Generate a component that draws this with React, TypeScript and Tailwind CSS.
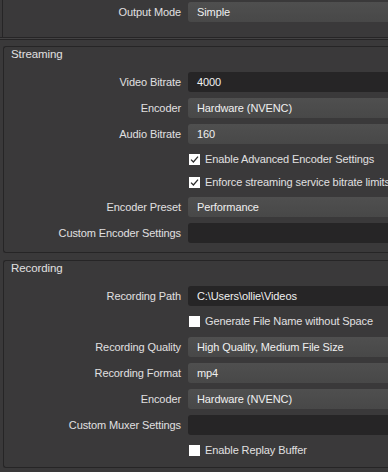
import React from 'react'

type Row =
  | { kind: 'combo'; label: string; value: string }
  | { kind: 'edit'; label: string; value: string }
  | { kind: 'check'; label: string; checked: boolean; h: string }

const streaming: Row[] = [
  { kind: 'edit', label: 'Video Bitrate', value: '4000' },
  { kind: 'combo', label: 'Encoder', value: 'Hardware (NVENC)' },
  { kind: 'combo', label: 'Audio Bitrate', value: '160' },
  { kind: 'check', label: 'Enable Advanced Encoder Settings', checked: true, h: 'h-[18px]' },
  { kind: 'check', label: 'Enforce streaming service bitrate limits', checked: true, h: 'h-[17px]' },
  { kind: 'combo', label: 'Encoder Preset', value: 'Performance' },
  { kind: 'edit', label: 'Custom Encoder Settings', value: '' },
]

const recording: Row[] = [
  { kind: 'edit', label: 'Recording Path', value: 'C:\\Users\\ollie\\Videos' },
  { kind: 'check', label: 'Generate File Name without Space', checked: false, h: 'h-[19px]' },
  { kind: 'combo', label: 'Recording Quality', value: 'High Quality, Medium File Size' },
  { kind: 'combo', label: 'Recording Format', value: 'mp4' },
  { kind: 'combo', label: 'Encoder', value: 'Hardware (NVENC)' },
  { kind: 'edit', label: 'Custom Muxer Settings', value: '' },
  { kind: 'check', label: 'Enable Replay Buffer', checked: false, h: 'h-[19px]' },
]

function CheckBox({ checked }: { checked: boolean }) {
  return (
    <div className="w-[11px] h-[11px] bg-white flex items-center justify-center shrink-0">
      {checked && (
        <svg width="9" height="9" viewBox="0 0 9 9">
          <path d="M1 4.6 L3.4 7 L8 1.6" fill="none" stroke="#2b2b2b" strokeWidth="1.3" />
        </svg>
      )}
    </div>
  )
}

function FormRow({ row }: { row: Row }) {
  if (row.kind === 'check') {
    return (
      <div className={`flex items-center ${row.h}`}>
        <div className="w-[185px] shrink-0" />
        <CheckBox checked={row.checked} />
        <span className="ml-[5px] whitespace-nowrap text-[#e1e0e1]">{row.label}</span>
      </div>
    )
  }
  return (
    <div className="flex items-center h-[20px]">
      <div className="w-[177px] shrink-0 text-right whitespace-nowrap text-[#e1e0e1]">{row.label}</div>
      <div
        className={`ml-[7px] flex-1 h-[20px] rounded-l-[3px] flex items-center pl-[9px] whitespace-nowrap text-[#f0f0f0] ${
          row.kind === 'combo' ? 'bg-gradient-to-b from-[#4f4f4f] to-[#484848]' : 'bg-[#262526]'
        }`}
      >
        {row.value}
      </div>
    </div>
  )
}

function Group({ title, rows, className }: { title: string; rows: Row[]; className: string }) {
  return (
    <div className={`ml-[3px] border-t border-l border-b border-[#262526] rounded-l-[3px] ${className}`}>
      <div className="h-[15px] flex items-center">
        <div className="pl-[7px] pr-[6px] h-full flex items-center text-[11.5px]">{title}</div>
      </div>
      <div className="mt-[10px] flex flex-col gap-[6px]">
        {rows.map((r, i) => (
          <FormRow key={i} row={r} />
        ))}
      </div>
    </div>
  )
}

export default function App() {
  return (
    <div
      className="w-[388px] h-[472px] overflow-hidden bg-[#3a393a] text-[11px] tracking-[-0.1px] text-[#e1e0e1]"
      style={{ fontFamily: '"Liberation Sans", Arial, sans-serif' }}
    >
      {/* output mode frame */}
      <div className="ml-[2px] h-[37px] border-l border-[#262526] pt-[2px]">
        <div className="flex items-center h-[20px]">
          <div className="w-[178px] shrink-0 text-right text-[#e1e0e1]">Output Mode</div>
          <div className="ml-[7px] flex-1 h-[20px] rounded-l-[3px] bg-gradient-to-b from-[#4f4f4f] to-[#484848] flex items-center pl-[9px] text-[#f0f0f0]">
            Simple
          </div>
        </div>
      </div>
      <div className="h-px bg-[#262526]" />
      <div className="h-px bg-[#434243]" />
      <div className="h-px bg-[#262526]" />

      <Group title="Streaming" rows={streaming} className="mt-[6px] h-[207px]" />
      <Group title="Recording" rows={recording} className="mt-[7px] h-[208px]" />
    </div>
  )
}
